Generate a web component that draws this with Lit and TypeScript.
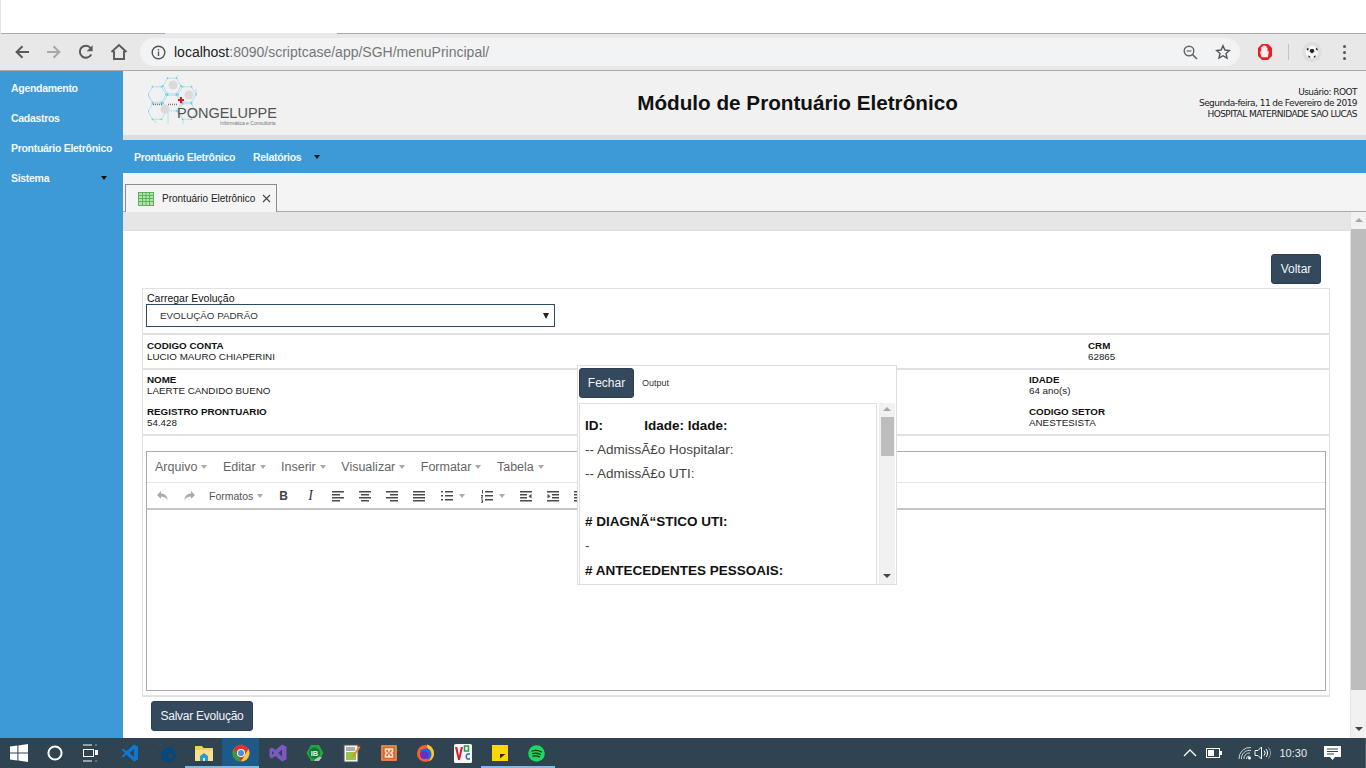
import { LitElement, html, css, svg } from 'lit';
import { customElement } from 'lit/decorators.js';

// honeycomb cells of the logo, flat-top hexagons
const hexCenters: [number, number][] = [
  [172, 87], [187, 95.500], [157, 95.500], [172, 104], [157, 112.500], [187, 112.500],
];

function hexPath(cx: number, cy: number, r = 9) {
  const h = r * 0.866;
  return `M${cx - r} ${cy}L${cx - r / 2} ${cy - h}L${cx + r / 2} ${cy - h}L${cx + r} ${cy}L${cx + r / 2} ${cy + h}L${cx - r / 2} ${cy + h}Z`;
}

function hexNodes(cx: number, cy: number, r = 9) {
  const h = r * 0.866;
  return [[cx - r, cy], [cx - r / 2, cy - h], [cx + r / 2, cy - h], [cx + r, cy], [cx + r / 2, cy + h], [cx - r / 2, cy + h]];
}

function logo() {
  return html`<svg class="logo" width="130" height="64" viewBox="148 72 130 64">
    <g stroke="#a0e0ee" stroke-width="0.8" fill="none">
      ${hexCenters.map(([x, y]) => svg`<path d=${hexPath(x, y)} />`)}
      <path d="M176 79l2-3M196 95l0-5M148 95l2 5M152 120l5 4M168 113v12M183 120v5" />
    </g>
    ${hexCenters.flatMap(([x, y]) => hexNodes(x, y)).map(([x, y]) => svg`<circle cx=${x} cy=${y} r="0.9" fill="#6ad0e6" />`)}
    <circle cx="173" cy="86" r="4.500" fill="#dadada" />
    <circle cx="189" cy="96" r="4.500" fill="#dadada" />
    <circle cx="165" cy="110" r="4.500" fill="#dadada" />
    <path d="M153 105.500h9M168 105.500h9" stroke="#777" stroke-width="1.500" stroke-dasharray="1 1" />
    <path d="M180 98h2v2h2v2h-2v2h-2v-2h-2v-2h2z" fill="#e8141c" />
  </svg>`;
}

const icons = {
  back: html`<svg width="16" height="16" viewBox="0 0 16 16"><path d="M15 8H3M8.500 2.200 2.600 8l5.900 5.800" fill="none" stroke="#5a5a5a" stroke-width="2"/></svg>`,
  forward: html`<svg width="16" height="16" viewBox="0 0 16 16"><path d="M1 8h12M7.500 2.200 13.400 8l-5.900 5.800" fill="none" stroke="#a8a8a8" stroke-width="2"/></svg>`,
  reload: html`<svg width="16" height="16" viewBox="0 0 16 16"><path d="M13.200 10.500A6 6 0 1 1 12.600 4" fill="none" stroke="#5a5a5a" stroke-width="2"/><path d="M14.600 1.200v6h-6z" fill="#5a5a5a"/></svg>`,
  home: html`<svg width="18" height="18" viewBox="0 0 18 18"><path d="M1.500 9 9 2l7.500 7M4 8v8h10V8" fill="none" stroke="#5a5a5a" stroke-width="1.900"/></svg>`,
  info: html`<svg width="15" height="15" viewBox="0 0 15 15"><circle cx="7.500" cy="7.500" r="6.300" fill="none" stroke="#555" stroke-width="1.400"/><path d="M6.800 6.600h1.400v4.400H6.800zM6.800 3.900h1.400v1.500H6.800z" fill="#555"/></svg>`,
  zoom: html`<svg width="15" height="15" viewBox="0 0 15 15"><circle cx="6" cy="6" r="4.800" fill="none" stroke="#666" stroke-width="1.400"/><path d="M9.600 9.600 14 14" stroke="#666" stroke-width="1.600"/><path d="M3.600 6h4.800" stroke="#666" stroke-width="1.200"/></svg>`,
  star: html`<svg width="16" height="16" viewBox="0 0 16 16"><path d="m8 1.800 1.900 4.200 4.500.5-3.400 3 1 4.500L8 11.700 4 14l1-4.500-3.400-3 4.500-.5z" fill="none" stroke="#555" stroke-width="1.400"/></svg>`,
  adblock: html`<svg width="16" height="18" viewBox="0 0 16 18"><path d="M5 1h6l4 4v8l-4 4H5l-4-4V5z" fill="#ee1c25"/><path d="M4.500 14.200 3 8.500h1.200V4h1.200V2.800h1.400v-.4h1.400v.7h1.300v1.700h1v4l1.400-1-.9 6.400z" fill="#f6efef"/></svg>`,
  ball: html`<svg width="30" height="30" viewBox="0 0 30 30"><circle cx="15" cy="15" r="10" fill="#dedede"/><circle cx="15" cy="15" r="6.400" fill="#f7f7f7"/><path d="m13.500 12 3 0 1 2.600-2.500 2-2.500-2zM9.600 12l1.600-1.600.6 2.200-1.400 1.200zM19.200 10.400l1.600 1.800-.4 1.600-1.600-1.200zM11 18.600l2 .6.4 1.600-1.600-.4zM17 19l2-.6-.8 1.900-1.600.5z" fill="#2a2a2a"/></svg>`,
  grid: html`<svg width="16" height="14" viewBox="0 0 16 14"><rect width="16" height="14" fill="#b8e3a8"/><path d="M0 .5h16M0 3.500h16M0 6.500h16M0 9.500h16M0 13.500h16M.5 0v14M4.500 0v14M8 0v14M11.500 0v14M15.500 0v14" stroke="#58b35a" stroke-width="1"/></svg>`,
  close: html`<svg width="9" height="9" viewBox="0 0 9 9"><path d="m1 1 7 7M8 1 1 8" stroke="#444" stroke-width="1.100"/></svg>`,
};

const ed = (d: string) => html`<svg width="14" height="14" viewBox="0 0 14 14"><path d=${d} fill="#4a4a4a"/></svg>`;

const alignLeft = 'M1 2h12v1.600H1zM1 5h8v1.600H1zM1 8h12v1.600H1zM1 11h8v1.600H1z';
const alignCenter = 'M1 2h12v1.600H1zM3 5h8v1.600H3zM1 8h12v1.600H1zM3 11h8v1.600H3z';
const alignRight = 'M1 2h12v1.600H1zM5 5h8v1.600H5zM1 8h12v1.600H1zM5 11h8v1.600H5z';
const justify = 'M1 2h12v1.600H1zM1 5h12v1.600H1zM1 8h12v1.600H1zM1 11h12v1.600H1z';
const bullets = 'M1 2h2v1.600H1zM5 2h8v1.400H5zM1 6h2v1.600H1zM5 6h8v1.400H5zM1 10h2v1.600H1zM5 10h8v1.400H5z';
const numbers = 'M2 1h1v3.400H2zM5 2h8v1.400H5zM1 6h2v1L2 8.400h1v1H1v-1l1-1.400H1zM5 6h8v1.400H5zM1 10.500h2v3.200H1v-.7h1v-.5H1.500v-.6H2v-.6H1zM5 10h8v1.400H5z';
const outdent = 'M1 2h12v1.600H1zM1 5h7v1.600H1zM1 8h7v1.600H1zM1 11h12v1.600H1zM12.500 5v4.600L9.500 7.300z';
const indent = 'M1 2h12v1.600H1zM6 5h7v1.600H6zM6 8h7v1.600H6zM1 11h12v1.600H1zM1.500 5v4.600L4.500 7.300z';

const taskIcons = [
  html`<svg width="18" height="18" viewBox="0 0 18 18"><path d="M0 2.600 7.400 1.500v7H0zM8.400 1.400 18 0v8.500H8.400zM0 9.500h7.400v7L0 15.400zM8.400 9.500H18V18l-9.600-1.400z" fill="#fff"/></svg>`,
  html`<svg width="16" height="16" viewBox="0 0 16 16" style="margin-right:2px"><circle cx="8" cy="8" r="6.600" fill="none" stroke="#fff" stroke-width="2"/></svg>`,
  html`<svg width="17" height="18" viewBox="0 0 17 18" style="margin-right:4px"><path d="M1 1h9M1 17h9M13.500 1h1M13.500 17h1" stroke="#fff"/><rect x="1.500" y="5.500" width="10" height="7" fill="none" stroke="#fff"/><rect x="13" y="6" width="3" height="5" fill="#fff"/></svg>`,
  html`<svg width="18" height="18" viewBox="0 0 18 18"><path d="M13 .5 17 2.400v13.200l-4 2-7.600-6.900L2 13.400.5 12.300 4 9 .5 5.700 2 4.600l3.400 2.700zM13 5 8.600 9l4.400 4z" fill="#0a78d0"/></svg>`,
  html`<svg width="22" height="22" viewBox="0 0 22 22"><circle cx="12.500" cy="13" r="7.500" fill="#04487f"/><circle cx="4" cy="2.500" r="1" fill="#0f5c9a"/><circle cx="14.500" cy="14" r="2.600" fill="#2f4450"/></svg>`,
  html`<svg width="18" height="17" viewBox="0 0 18 17"><path d="M0 1h7l1.500 2H18v3H0z" fill="#f4cf60"/><path d="M0 5h18v11H0z" fill="#fce08a"/><path d="M5 16v-5l4-3 4 3v5h-3v-3H8v3z" fill="#2a9bd6"/></svg>`,
  html`<svg width="18" height="18" viewBox="0 0 18 18"><circle cx="9" cy="9" r="8.600" fill="#d8382d"/><path d="M1.600 4.600 5.500 11 9 17.600A8.600 8.600 0 0 1 1.600 4.600z" fill="#2e9d45"/><path d="M9 17.600 13 10.500 16.500 5A8.600 8.600 0 0 1 9 17.600z" fill="#f7c93e"/><circle cx="9" cy="9" r="4" fill="#fff"/><circle cx="9" cy="9" r="3.100" fill="#4a8fe0"/></svg>`,
  html`<svg width="18" height="18" viewBox="0 0 18 18"><path d="M13 .5 17.500 2.500v13L13 17.500 6.500 12 2.800 14.500.5 13V5l2.300-1.500L6.500 6zM13 5.500 9.300 9l3.700 3.500zM3 7v4l2-2z" fill="#7e57c2"/></svg>`,
  html`<svg width="18" height="18" viewBox="0 0 18 18"><path d="M5 1h8l4.500 8L13 17H5L.5 9z" fill="#26a248"/><path d="M11 13h5l-3 4H8z" fill="#b9c4ba"/><circle cx="8.500" cy="9" r="5.500" fill="#0d7a31"/><text x="8.500" y="11.800" font-family="Liberation Sans" font-size="7.500" font-weight="700" fill="#e8f8e8" text-anchor="middle">IB</text></svg>`,
  html`<svg width="18" height="20" viewBox="0 0 18 20"><rect x="1" y="2" width="14" height="17" fill="#f3f3f3" stroke="#555"/><rect x="3" y="9" width="10" height="8" fill="#93c64a"/><path d="M3 5h9M3 7h9" stroke="#666"/><path d="m9 13 7-10 1.500 1L11 14z" fill="#e88b22"/><path d="m15.800 3 1-1.800 1 .8-.6 1.800z" fill="#a22"/></svg>`,
  html`<svg width="16" height="16" viewBox="0 0 16 16"><rect width="16" height="16" rx="1" fill="#d9652b"/><rect x="1" y="1" width="14" height="14" fill="none" stroke="#ef9a66"/><path d="M4.500 4h2.700l.8 2 .8-2h2.700v2.700L10 8l1.500 1.300V12H8.800L8 10l-.8 2H4.500V9.300L6 8 4.500 6.700z" fill="none" stroke="#fde6d6" stroke-width="1.600"/></svg>`,
  html`<svg width="20" height="20" viewBox="0 0 20 20"><circle cx="9.500" cy="10.500" r="8.500" fill="#ff5d2e"/><path d="M11 1.500c4 1 7 4.500 7 9 0 3.500-2 6.500-5 8 2-3 2-7 0-10-1-1.500-2-4-2-7z" fill="#ffc92e"/><circle cx="8.500" cy="11.500" r="4.600" fill="#6a2cc4"/><path d="M4 7c1 2 3 2 5 1.500 2-.5 4 1 4 3s-2 4-4 4c3 2 6.500 0 6.500-4C15.500 7 12 4.500 9 5.500 7 6 5.500 7 4 7z" fill="#1f66d8"/></svg>`,
  html`<svg width="18" height="19" viewBox="0 0 18 19"><rect width="18" height="19" rx="1.500" fill="#f6f6f6"/><path d="M1 3h2.300l1.700 9 1.800-9H9l-3 13H4z" fill="#d32030"/><path d="M10.500 2h4v5h-4z" fill="none" stroke="#2a9d4a" stroke-width="1.500"/><path d="M16 10h-2.500a3 3 0 0 0 0 5H16" fill="none" stroke="#1f6fd0" stroke-width="1.500"/></svg>`,
  html`<svg width="16" height="16" viewBox="0 0 16 16"><rect width="16" height="16" fill="#ffd800"/><path d="M8 13.500V9h5.500z" fill="#2a2a1a"/></svg>`,
  html`<svg width="17" height="17" viewBox="0 0 17 17"><circle cx="8.500" cy="8.500" r="8.300" fill="#1ed760"/><path d="M4 6c3-.9 6.500-.6 9.300.9M4.500 8.700c2.600-.7 5.500-.5 7.900.8M5 11.200c2.200-.5 4.400-.4 6.500.7" fill="none" stroke="#16331f" stroke-width="1.300" stroke-linecap="round"/></svg>`,
];

const activeTasks = new Set([5, 6, 13, 14]);

@customElement('app-root')
export class AppRoot extends LitElement {
  static styles = css`
    :host {
      display: flex;
      flex-direction: column;
      width: 1366px;
      height: 768px;
      overflow: hidden;
      font-family: "Liberation Sans", Arial, sans-serif;
      color: #222;
      background: #fff;
    }
    .tabstrip {
      height: 34px; flex: none; box-sizing: border-box; border-left: 1px solid #e4e4e4; padding-top: 33px;
      background: linear-gradient(to top, #aaa 1px, #fff 1px);
    }
    .tab-edge { width: 172px; height: 1px; margin-left: 164px; background: #e8e8e8; }
    .toolbar {
      height: 36px; flex: none; background: #e8e8e8; border-bottom: 1px solid #aaa; box-sizing: content-box;
      display: flex; align-items: center; padding-left: 14px;
    }
    .nav { width: 32px; display: flex; justify-content: flex-start; align-items: center; }
    .nav.last { width: 30px; }
    .omnibox {
      width: 1100px; height: 28px; border-radius: 14px; background: #f1f3f4; flex: none;
      display: flex; align-items: center; padding: 0 9px 0 11px; box-sizing: border-box;
    }
    .url { margin-left: 8px; font-size: 14px; color: #777; flex: 1; white-space: nowrap; }
    .url b { font-weight: 400; color: #222; }
    .omni-icon { margin-left: 17px; display: flex; }
    .tool-right { display: flex; align-items: center; flex: 1; }
    .adblock { margin-left: 17px; display: flex; }
    .sep { width: 1px; height: 16px; background: #c4c4c4; margin: 0 8px 0 15px; }
    .ball { display: flex; }
    .dots { display: flex; flex-direction: column; gap: 3px; margin-left: 16px; }
    .dots i { width: 3px; height: 3px; border-radius: 50%; background: #555; display: block; }

    .body { flex: 1; display: flex; min-height: 0; }
    .side { width: 123px; flex: none; background: #3e9ad6; padding-top: 2px; box-sizing: border-box; }
    .side-item {
      height: 30px; display: flex; align-items: center; justify-content: space-between; white-space: nowrap;
      padding: 0 16px 0 11px; font-size: 10.500px; letter-spacing: -0.3px; font-weight: 700; color: #f2f8fc;
    }
    .caret { width: 0; height: 0; border: 3.500px solid transparent; border-top: 4px solid #111; border-bottom: 0; }
    .main { flex: 1; display: flex; flex-direction: column; min-width: 0; }
    .head {
      height: 64px; flex: none; background: #f1f1f1; border-bottom: 5px solid #dcdcdc;
      display: flex; align-items: center; position: relative;
    }
    .logo { margin-left: 25px; flex: none; }
    .logo-text { position: absolute; left: 54px; top: 32px; font-size: 14.500px; color: #555; line-height: 20px; }
    .logo-sub { position: absolute; left: 97px; top: 49px; font-size: 5px; color: #777; line-height: 6px; }
    .title { position: absolute; left: 0; right: 0; top: 20px; padding-left: 106px; text-align: center; font-size: 20.700px; font-weight: 700; color: #111; line-height: 24px; }
    .user { margin-left: auto; padding-right: 9px; text-align: right; font-size: 9px; line-height: 11px; color: #222; font-family: "DejaVu Sans", sans-serif; letter-spacing: -0.55px; }
    .menu {
      height: 33px; flex: none; background: #3e9ad6; display: flex; align-items: center;
      padding-left: 11px; font-size: 10.500px; letter-spacing: -0.3px; font-weight: 700; color: #f2f8fc;
    }
    .menu span { margin-right: 18px; }
    .menu span:nth-child(2) { margin-right: 13px; }
    .tabs { height: 39px; flex: none; background: #f4f4f4; border-bottom: 1px solid #aaa; box-sizing: border-box; padding: 11px 0 0 2px; }
    .tab {
      width: 152px; height: 28px; box-sizing: border-box; background: #f4f4f4; border: 1px solid #8e8e8e; border-bottom: 0;
      display: flex; align-items: center; padding-left: 12px; font-size: 10px; color: #222;
    }
    .tab label { margin: 0 7px 0 8px; white-space: nowrap; }
    .page { flex: 1; display: flex; min-height: 0; }
    .content { flex: 1; display: flex; flex-direction: column; min-width: 0; position: relative; }
    .strip { height: 18px; background: #e6e6e6; border-bottom: 1px solid #dedede; flex: none; }
    .form { padding: 23px 20px 0 19px; }
    .btn {
      background: #34495e; color: #f2f4f6; border: 1px solid #2c3e50; border-radius: 3px;
      font-family: "Liberation Sans", sans-serif; font-size: 12px; height: 30px; box-sizing: border-box; padding: 0;
      display: flex; align-items: center; justify-content: center;
    }
    .voltar-row { display: flex; justify-content: flex-end; padding-right: 9px; height: 34px; }
    .voltar { width: 50px; }
    .box { border: 2px solid #e1e1e1; border-left-width: 1px; border-right-width: 1px; border-bottom-width: 0; padding-left: 4px; box-sizing: border-box; }
    .box1 { height: 45px; padding-top: 4px; border-top-width: 1px; }
    .box2 { height: 35px; padding-top: 5px; }
    .box3 { height: 66px; padding-top: 4px; }
    .box4 { height: 263px; padding: 15px 3px 0 3px; border-bottom-width: 2px; }
    .load-label { font-size: 10.500px; line-height: 11px; color: #111; }
    .select {
      width: 409px; height: 23px; box-sizing: border-box; border: 1px solid #2c4a63; margin-left: -1px;
      display: flex; align-items: center; justify-content: space-between; padding: 0 5px 0 13px; font-size: 9.800px; color: #333;
    }
    .select i { width: 0; height: 0; border: 3px solid transparent; border-top: 6px solid #222; border-bottom: 0; }
    .fields { display: grid; line-height: 11px; font-size: 9.800px; color: #222; }
    .fields strong { display: block; color: #111; }
    .f2 { grid-template-columns: 941px 1fr; }
    .f3 { grid-template-columns: 882px 1fr; row-gap: 10px; }
    .editor { height: 240px; border: 1px solid #aaa; box-sizing: border-box; display: flex; flex-direction: column; }
    .ed-menu { height: 31px; flex: none; display: flex; align-items: center; padding-left: 8px; border-bottom: 1px solid #e4e4e4; box-sizing: border-box; font-size: 12.500px; color: #666; }
    .ed-menu span { display: flex; align-items: center; margin-right: 15.500px; }
    .mini { width: 0; height: 0; border: 3px solid transparent; border-top: 4px solid #aaa; border-bottom: 0; margin-left: 4px; }
    .ed-tools { height: 27px; flex: none; display: flex; align-items: center; border-bottom: 2px solid #c5c5c5; box-sizing: border-box; padding-left: 3px; font-size: 10.500px; color: #555; }
    .ed-tools > * { flex: none; }
    .cell { width: 27px; display: flex; justify-content: center; align-items: center; }
    .cell.hist { width: 26px; }
    .bold { font-weight: 700; font-size: 12px; color: #444; }
    .ital { font-style: italic; font-size: 14px; font-family: "Liberation Serif", serif; color: #333; }
    .wcell { width: 40px; display: flex; align-items: center; padding-left: 7.500px; box-sizing: border-box; }
    .wcell .mini { margin-left: 5px; }
    .fmt { width: 68px; padding-left: 7px; box-sizing: border-box; display: flex; align-items: center; }
    .salvar { width: 102px; margin: 4px 0 0 9px; letter-spacing: -0.25px; }
    .popup {
      position: absolute; left: 454px; top: 153px; width: 320px; height: 220px; box-sizing: border-box;
      background: #fff; border: 1px solid #dedede; display: flex; flex-direction: column; padding: 2px 0 0 1px;
    }
    .pop-head { display: flex; align-items: center; height: 30px; flex: none; font-size: 9px; color: #333; }
    .fechar { width: 55px; }
    .pop-head span { margin-left: 8px; }
    .pop-body { flex: 1; margin-top: 5px; display: flex; min-height: 0; }
    .output { flex: 1; border: 1px solid #dedede; border-bottom: 0; padding: 10px 0 0 5px; overflow: hidden; font-size: 13.500px; line-height: 24.100px; color: #444; }
    .output p { margin: 0; height: 24.100px; white-space: pre; }
    .output b { color: #111; }
    .pop-bar { width: 16px; margin: 0 1px 0 2px; background: #f1f1f1; flex: none; position: relative; }
    .pop-bar .thumb { position: absolute; left: 2px; right: 1px; top: 14px; height: 39px; background: #bdbdbd; }
    .sb-up { position: absolute; left: 4px; width: 0; height: 0; border: 4px solid transparent; border-bottom: 4px solid #a8a8a8; border-top: 0; }
    .sb-down { position: absolute; left: 4px; width: 0; height: 0; border: 4px solid transparent; border-top: 4px solid #444; border-bottom: 0; }
    .scroll { width: 16px; flex: none; background: #f1f1f1; position: relative; border-left: 1px solid #e4e4e4; box-sizing: border-box; }
    .scroll .thumb { position: absolute; left: 0; right: 0; top: 17px; height: 461px; background: #bdbdbd; }

    .taskbar { height: 30px; flex: none; background: #2f4450; display: flex; align-items: center; color: #fff; }
    .task { width: 37px; height: 30px; display: flex; align-items: center; justify-content: center; box-sizing: border-box; flex: none; }
    .task.on { border-bottom: 2px solid #86b9e2; padding-top: 2px; }
    .task.chrome { background: #1c5a8a; }
    .tray { margin-left: auto; display: flex; align-items: center; font-size: 11px; color: #e8ecee; padding-right: 5px; border-right: 1px solid #4c5e69; height: 30px; }
    .tray svg { display: block; }
    .tr-chev { margin-right: 9px; }
    .tr-batt { margin-right: 16px; }
    .tr-wifi { margin-right: 2px; }
    .tr-vol { margin-right: 7px; }
    .tr-time { margin-right: 17px; }
    .tr-note { margin-right: 19px; }
  `;

  render() {
    return html`
      <div class="tabstrip"><div class="tab-edge"></div></div>
      <div class="toolbar">
        <span class="nav">${icons.back}</span>
        <span class="nav">${icons.forward}</span>
        <span class="nav">${icons.reload}</span>
        <span class="nav last">${icons.home}</span>
        <div class="omnibox">
          ${icons.info}
          <span class="url"><b>localhost</b>:8090/scriptcase/app/SGH/menuPrincipal/</span>
          <span class="omni-icon">${icons.zoom}</span>
          <span class="omni-icon">${icons.star}</span>
        </div>
        <div class="tool-right">
          <span class="adblock">${icons.adblock}</span>
          <span class="sep"></span>
          <span class="ball">${icons.ball}</span>
          <span class="dots"><i></i><i></i><i></i></span>
        </div>
      </div>
      <div class="body">
        <nav class="side">
          <div class="side-item">Agendamento</div>
          <div class="side-item">Cadastros</div>
          <div class="side-item">Prontuário Eletrônico</div>
          <div class="side-item">Sistema <i class="caret"></i></div>
        </nav>
        <div class="main">
          <header class="head">
            ${logo()}
            <span class="logo-text">PONGELUPPE</span>
            <span class="logo-sub">Informática e Consultoria</span>
            <div class="title">Módulo de Prontuário Eletrônico</div>
            <div class="user">Usuário: ROOT<br />Segunda-feira, 11 de Fevereiro de 2019<br />HOSPITAL MATERNIDADE SAO LUCAS</div>
          </header>
          <div class="menu">
            <span>Prontuário Eletrônico</span>
            <span>Relatórios</span>
            <i class="caret"></i>
          </div>
          <div class="tabs">
            <div class="tab">${icons.grid}<label>Prontuário Eletrônico</label>${icons.close}</div>
          </div>
          <div class="page">
            <div class="content">
              <div class="strip"></div>
              <div class="form">
                <div class="voltar-row"><button class="btn voltar">Voltar</button></div>
                <div class="box box1">
                  <div class="load-label">Carregar Evolução</div>
                  <div class="select">EVOLUÇÃO PADRÃO <i></i></div>
                </div>
                <div class="box box2">
                  <div class="fields f2">
                    <div><strong>CODIGO CONTA</strong>LUCIO MAURO CHIAPERINI</div>
                    <div><strong>CRM</strong>62865</div>
                  </div>
                </div>
                <div class="box box3">
                  <div class="fields f3">
                    <div><strong>NOME</strong>LAERTE CANDIDO BUENO</div>
                    <div><strong>IDADE</strong>64 ano(s)</div>
                    <div><strong>REGISTRO PRONTUARIO</strong>54.428</div>
                    <div><strong>CODIGO SETOR</strong>ANESTESISTA</div>
                  </div>
                </div>
                <div class="box box4">
                  <div class="editor">
                    <div class="ed-menu">
                      ${['Arquivo', 'Editar', 'Inserir', 'Visualizar', 'Formatar', 'Tabela'].map(
                        (m) => html`<span>${m}<i class="mini"></i></span>`
                      )}
                    </div>
                    <div class="ed-tools">
                      <span class="cell hist"><svg width="14" height="14" viewBox="0 0 14 14"><path d="M5 2 1 6l4 4V7.500c3 0 5 1 6.500 4 0-4-2.500-7-6.500-7z" fill="#aaa"/></svg></span>
                      <span class="cell hist"><svg width="14" height="14" viewBox="0 0 14 14"><path d="m9 2 4 4-4 4V7.500c-3 0-5 1-6.500 4 0-4 2.500-7 6.500-7z" fill="#aaa"/></svg></span>
                      <span class="fmt">Formatos<i class="mini"></i></span>
                      <span class="cell bold">B</span>
                      <span class="cell ital">I</span>
                      <span class="cell">${ed(alignLeft)}</span>
                      <span class="cell">${ed(alignCenter)}</span>
                      <span class="cell">${ed(alignRight)}</span>
                      <span class="cell">${ed(justify)}</span>
                      <span class="wcell">${ed(bullets)}<i class="mini"></i></span>
                      <span class="wcell">${ed(numbers)}<i class="mini"></i></span>
                      <span class="cell">${ed(outdent)}</span>
                      <span class="cell">${ed(indent)}</span>
                      <span class="cell">${ed(alignLeft)}</span>
                    </div>
                  </div>
                </div>
                <button class="btn salvar">Salvar Evolução</button>
              </div>
              <div class="popup">
                <div class="pop-head">
                  <button class="btn fechar">Fechar</button>
                  <span>Output</span>
                </div>
                <div class="pop-body">
                  <div class="output">
                    <p><b>ID:           Idade: Idade:</b></p>
                    <p>-- AdmissÃ£o Hospitalar:</p>
                    <p>-- AdmissÃ£o UTI:</p>
                    <p></p>
                    <p><b># DIAGNÃ“STICO UTI:</b></p>
                    <p>-</p>
                    <p><b># ANTECEDENTES PESSOAIS:</b></p>
                  </div>
                  <div class="pop-bar">
                    <i class="sb-up" style="top:4px"></i>
                    <div class="thumb"></div>
                    <i class="sb-down" style="bottom:6px"></i>
                  </div>
                </div>
              </div>
            </div>
            <div class="scroll">
              <i class="sb-up" style="top:6px"></i>
              <div class="thumb"></div>
              <i class="sb-down" style="bottom:7px"></i>
            </div>
          </div>
        </div>
      </div>
      <footer class="taskbar">
        ${taskIcons.map(
          (icon, i) => html`<div class="task ${activeTasks.has(i) ? 'on' : ''} ${i === 6 ? 'chrome' : ''}">${icon}</div>`
        )}
        <div class="tray">
          <svg class="tr-chev" width="14" height="8" viewBox="0 0 14 8"><path d="m1 7 6-6 6 6" fill="none" stroke="#fff" stroke-width="1.300"/></svg>
          <svg class="tr-batt" width="16" height="10" viewBox="0 0 16 10"><rect x=".5" y=".5" width="13" height="9" fill="none" stroke="#fff"/><rect x="2" y="2" width="6" height="6" fill="#fff"/><rect x="14" y="3" width="2" height="4" fill="#fff"/></svg>
          <svg class="tr-wifi" width="14" height="14" viewBox="0 0 14 14"><path d="M1 13A11 11 0 0 1 13 1.500M3.500 13A8 8 0 0 1 13 4.500M6 13a5.500 5.500 0 0 1 6-6M8.500 13a3 3 0 0 1 3-3" fill="none" stroke="#cfd6da"/><circle cx="11.500" cy="12" r="1.500" fill="#fff"/></svg>
          <svg class="tr-vol" width="18" height="14" viewBox="0 0 18 14"><path d="M1 4.500h3L7.500 1v12L4 9.500H1z" fill="none" stroke="#fff"/><path d="M10 4.500a3.500 3.500 0 0 1 0 5M12 3a6 6 0 0 1 0 8" fill="none" stroke="#fff"/><path d="M14.500 1.500a9 9 0 0 1 0 11" fill="none" stroke="#8c9aa2"/></svg>
          <span class="tr-time">10:30</span>
          <svg class="tr-note" width="17" height="16" viewBox="0 0 17 16"><path d="M0 1h17v11h-6l-2.500 3-2.500-3H0z" fill="#fff"/><path d="M3 4h11M3 6.500h11M3 9h7" stroke="#2f4450"/></svg>
        </div>
      </footer>
    `;
  }
}
